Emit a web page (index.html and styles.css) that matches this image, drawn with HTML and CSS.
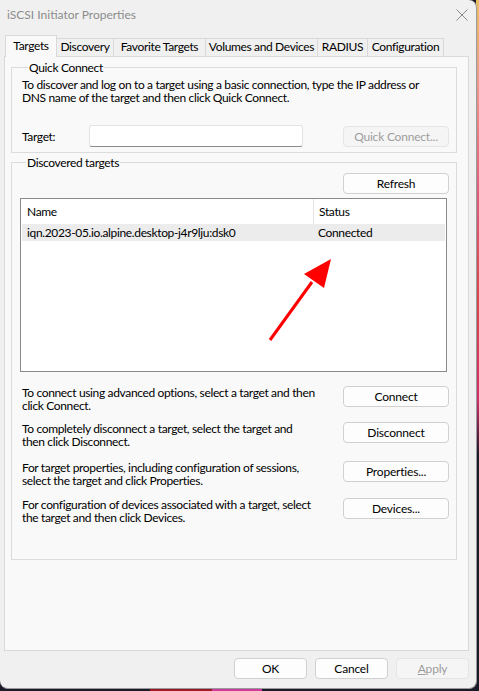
FILE: index.html
```html
<!DOCTYPE html>
<html>
<head>
<meta charset="utf-8">
<link rel="stylesheet" href="styles.css">
</head>
<body>
<div class="desk">
  <div class="window">
    <div class="titlebar">
      <span class="title">iSCSI Initiator Properties</span>
      <svg class="close" width="12" height="12" viewBox="0 0 12 12"><path d="M0.5 0.5 L11.5 11.5 M11.5 0.5 L0.5 11.5" stroke="#8a8a8a" stroke-width="1" fill="none"/></svg>
    </div>
    <div class="tabs">
      <div class="tab active t1">Targets</div>
      <div class="tab t2">Discovery</div>
      <div class="tab t3">Favorite Targets</div>
      <div class="tab t4">Volumes and Devices</div>
      <div class="tab t5">RADIUS</div>
      <div class="tab t6">Configuration</div>
    </div>
    <div class="page">
      <fieldset class="group quick">
        <legend>Quick Connect</legend>
        <p class="desc">To discover and log on to a target using a basic connection, type the IP address or<br>DNS name of the target and then click Quick Connect.</p>
        <div class="target-row">
          <span class="lbl">Target:</span>
          <div class="input"></div>
          <button class="btn disabled">Quick Connect...</button>
        </div>
      </fieldset>
      <fieldset class="group discovered">
        <legend>Discovered targets</legend>
        <div class="refresh-row"><button class="btn">Refresh</button></div>
        <div class="list">
          <div class="list-head">
            <div class="col name">Name</div>
            <div class="col status">Status</div>
          </div>
          <div class="list-row selected">
            <div class="col name">iqn.2023-05.io.alpine.desktop-j4r9lju:dsk0</div>
            <div class="col status">Connected</div>
          </div>
          <svg class="arrow" width="80" height="90" viewBox="0 0 80 90"><line x1="10" y1="85" x2="52" y2="27" stroke="#ff0000" stroke-width="3"/><polygon points="71,4 64,33 44,19" fill="#ff0000"/></svg>
        </div>
        <div class="action a1">
          <p>To connect using advanced options, select a target and then<br>click Connect.</p>
          <button class="btn">Connect</button>
        </div>
        <div class="action a2">
          <p>To completely disconnect a target, select the target and<br>then click Disconnect.</p>
          <button class="btn">Disconnect</button>
        </div>
        <div class="action a3">
          <p>For target properties, including configuration of sessions,<br>select the target and click Properties.</p>
          <button class="btn">Properties...</button>
        </div>
        <div class="action a4">
          <p>For configuration of devices associated with a target, select<br>the target and then click Devices.</p>
          <button class="btn">Devices...</button>
        </div>
      </fieldset>
    </div>
    <div class="footer">
      <button class="btn sm">OK</button>
      <button class="btn sm">Cancel</button>
      <button class="btn sm disabled"><u>A</u>pply</button>
    </div>
  </div>
</div>
</body>
</html>
```

FILE: styles.css
```css
html, body {
  margin: 0;
  padding: 0;
}
body {
  width: 479px;
  height: 691px;
  overflow: hidden;
  background: #1b1a28;
  font-family: "Lato", "Open Sans", sans-serif;
  font-size: 12px;
  letter-spacing: -0.35px;
  color: #000;
}
.desk {
  width: 479px;
  height: 691px;
  background:
    linear-gradient(to bottom, #e8c060 0px, #ec9a8c 80px, #e05a7a 200px, #d8484a 300px, #d0306a 400px, #1b1a28 455px, #1b1a28 100%) right top / 3px 100% no-repeat,
    linear-gradient(to right, #1b1a28 150px, #a01828 150px, #a01828 212px, #d03a9a 212px, #d03a9a 262px, #1b1a28 262px) left bottom / 100% 3px no-repeat,
    #1b1a28;
}
.window {
  width: 477px;
  height: 689px;
  box-sizing: border-box;
  background: #f0f0f0;
  border-right: 1px solid #9a9a9a;
  border-bottom: 1px solid #9a9a9a;
  border-radius: 0 8px 8px 8px;
  display: flex;
  flex-direction: column;
}
.titlebar {
  height: 29px;
  display: flex;
  align-items: center;
  justify-content: space-between;
  padding: 0 8px 0 7px;
}
.title {
  color: #8c8c8c;
  font-size: 12px;
  letter-spacing: 0;
}
.tabs {
  display: flex;
  align-items: flex-end;
  height: 27px;
  padding-left: 5px;
}
.tab {
  line-height: 16px;
  box-sizing: border-box;
  height: 18px;
  text-align: center;
  background: #f0f0f0;
  border: 1px solid #d9d9d9;
  border-bottom: none;
  margin-left: -1px;
  white-space: nowrap;
}
.tab:first-child {
  margin-left: 0;
}
.t1 { width: 52px; }
.t2 { width: 58px; }
.t3 { width: 93px; }
.t4 { width: 113px; }
.t5 { width: 51px; }
.t6 { width: 77px; }
.tab.active {
  height: 22px;
  line-height: 19px;
  background: #f9f9f9;
  position: relative;
  z-index: 1;
  margin-bottom: -1px;
}
.page {
  margin-left: 4px;
  width: 465px;
  height: 595px;
  box-sizing: border-box;
  background: #f9f9f9;
  border: 1px solid #d9d9d9;
  padding: 0 11px 0 6px;
}
fieldset.group {
  margin: 0;
  border: 1px solid #dcdcdc;
  padding: 0;
  min-width: 0;
}
legend {
  padding: 0 1px;
  margin-left: 6px;
  line-height: 13px;
}
.quick {
  margin-top: 4px !important;
  height: 92px;
  box-sizing: border-box;
  padding: 4px 7px 0 10px !important;
}
.desc, .action p {
  margin: 0;
  line-height: 13px;
}
.target-row {
  display: flex;
  align-items: center;
  margin-top: 21px;
}
.lbl {
  width: 67px;
}
.input {
  width: 212px;
  height: 20px;
  background: #fff;
  border: 1px solid #e4e4e4;
  border-bottom-color: #8a8a8a;
  border-radius: 3px;
}
.btn {
  font-family: inherit;
  font-size: 12px;
  letter-spacing: -0.2px;
  color: #000;
  background: #fdfdfd;
  border: 1px solid #d0d0d0;
  border-radius: 4px;
  width: 106px;
  height: 21px;
  padding: 0;
  line-height: 19px;
}
.btn.disabled {
  color: #9d9d9d;
  background: #f5f5f5;
  border-color: #e5e5e5;
}
.target-row .btn {
  margin-left: auto;
}
.discovered {
  margin-top: 3px !important;
  height: 404px;
  box-sizing: border-box;
  padding: 4px 7px 0 8px !important;
}
.refresh-row {
  display: flex;
  justify-content: flex-end;
}
.list {
  position: relative;
  margin-top: 4px;
  height: 174px;
  box-sizing: border-box;
  border: 1px solid #8a8a8a;
  background: #fff;
  margin-right: 2px;
  padding: 0 1px;
}
.list-head, .list-row {
  display: flex;
}
.list-head {
  height: 25px;
  line-height: 25px;
}
.list-head .name {
  border-right: 1px solid #e5e5e5;
}
.col.name {
  width: 286px;
  padding-left: 5px;
}
.col.status {
  padding-left: 5px;
}
.list-row {
  height: 17px;
  line-height: 17px;
}
.list-row.selected {
  background: #ececec;
}
.arrow {
  position: absolute;
  left: 239px;
  top: 56px;
}
.action {
  display: flex;
  justify-content: space-between;
  align-items: flex-start;
  padding-left: 2px;
}
.a1 { margin-top: 14px; }
.a2 { margin-top: 10px; }
.a3 { margin-top: 13px; }
.a4 { margin-top: 11px; }
.footer {
  display: flex;
  justify-content: flex-end;
  gap: 8px;
  padding: 7px 7px 0 0;
}
.btn.sm {
  width: 73px;
}
u {
  text-decoration: underline;
}
```
